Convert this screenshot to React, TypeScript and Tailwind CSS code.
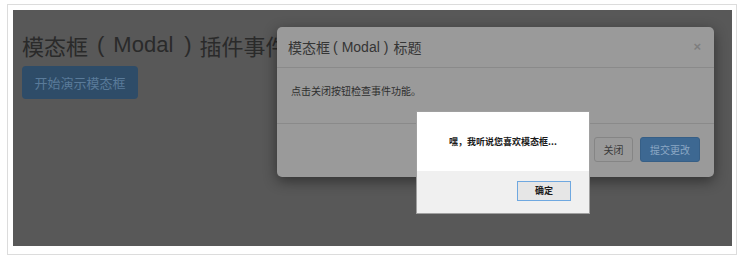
import React from "react";

export default function App() {
  return (
    <div className="w-[741px] h-[259px] bg-white pt-[4px] pl-[7px] font-['Noto_Sans_CJK_SC','Noto_Sans',sans-serif]">
      <div className="w-[730px] h-[251px] border border-[#dcdcdc] pt-[5px] pl-[5px]">
        <div className="relative w-[719px] h-[236px] bg-[#585858] pl-[9px] pt-[22px]">
          <h1 className="flex items-center text-[22px] leading-[26px] text-[#2a2a2a] whitespace-nowrap">
            <span>模态框</span>
            <span className="ml-[9px] mr-[9px] font-['Liberation_Sans',sans-serif]">(</span>
            <span className="font-['Liberation_Sans',sans-serif]">Modal</span>
            <span className="ml-[11px] mr-[8px] font-['Liberation_Sans',sans-serif]">)</span>
            <span>插件事件</span>
          </h1>
          <button className="mt-[8px] w-[116px] h-[33px] rounded-[4px] bg-[#2e4c68] text-[13px] text-[#5a7b9a] flex items-center justify-center">
            开始演示模态框
          </button>

          <div className="absolute left-[264px] top-[17px] w-[437px] h-[150px] bg-[#9a9a9a] rounded-[5px] shadow-[0_4px_14px_rgba(0,0,0,0.45)] flex flex-col">
            <div className="h-[41px] border-b border-[#8a8a8a] flex items-center justify-between pl-[11px] pr-[13px]">
              <span className="flex items-center text-[14px] text-[#353535] whitespace-nowrap">
                <span>模态框</span>
                <span className="ml-[3px] mr-[4px] font-['Liberation_Sans',sans-serif]">(</span>
                <span className="font-['Liberation_Sans',sans-serif]">Modal</span>
                <span className="ml-[4px] mr-[5px] font-['Liberation_Sans',sans-serif]">)</span>
                <span>标题</span>
              </span>
              <span className="-mt-[2px] text-[13px] leading-none text-[#7e7e7e] font-bold font-['Liberation_Sans',sans-serif]">×</span>
            </div>
            <div className="h-[56px] border-b border-[#8a8a8a] pl-[14px] pt-[15px] text-[10px] text-[#2e2e2e]">
              点击关闭按钮检查事件功能。
            </div>
            <div className="flex-1 flex justify-end items-start gap-[7px] pt-[13px] pr-[14px]">
              <button className="w-[39px] h-[25px] rounded-[3px] border border-[#858585] text-[10px] text-[#3a3a3a] flex items-center justify-center">
                关闭
              </button>
              <button className="w-[60px] h-[25px] rounded-[3px] bg-[#3d6892] border border-[#375f86] text-[10px] text-[#8ba7c4] flex items-center justify-center">
                提交更改
              </button>
            </div>
          </div>

          <div className="absolute left-[403px] top-[101px] w-[174px] h-[103px] bg-white border border-[#a0a0a0] flex flex-col">
            <div className="h-[59px] flex items-center justify-center text-[9px] font-bold text-[#1a1a1a] whitespace-nowrap">
              嘿，我听说您喜欢模态框...
            </div>
            <div className="flex-1 bg-[#f0f0f0] flex justify-end items-start pt-[10px] pr-[18px]">
              <button className="w-[54px] h-[20px] border border-[#6fa8e0] bg-[#e6e6e6] text-[9px] font-bold text-[#1a1a1a] flex items-center justify-center">
                确定
              </button>
            </div>
          </div>
        </div>
      </div>
    </div>
  );
}
